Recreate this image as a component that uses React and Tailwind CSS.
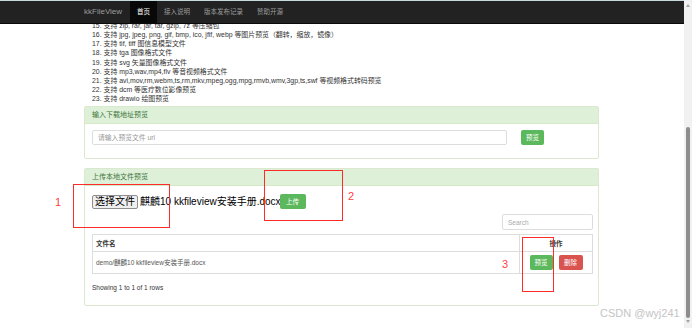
export default function App() {
  const lines = [
    "15. 支持 zip, rar, jar, tar, gzip, 7z 等压缩包",
    "16. 支持 jpg, jpeg, png, gif, bmp, ico, jfif, webp 等图片预览（翻转，缩放，镜像）",
    "17. 支持 tif, tiff 图信息模型文件",
    "18. 支持 tga 图像格式文件",
    "19. 支持 svg 矢量图像格式文件",
    "20. 支持 mp3,wav,mp4,flv 等音视频格式文件",
    "21. 支持 avi,mov,rm,webm,ts,rm,mkv,mpeg,ogg,mpg,rmvb,wmv,3gp,ts,swf 等视频格式转码预览",
    "22. 支持 dcm 等医疗数位影像预览",
    "23. 支持 drawio 绘图预览",
  ];
  return (
    <div className="relative flex h-[328px] w-[692px] overflow-hidden bg-white font-['Liberation_Sans','Noto_Sans_CJK_SC',sans-serif] text-[#333]">
      <div className="flex w-[684px] flex-col">
        <nav className="relative z-10 flex h-[24px] shrink-0 items-stretch border-t border-t-[#c9dadd] border-b border-b-[#0a0a0a] bg-[#222] pl-[84px] text-[6.5px] text-[#9d9d9d]">
          <div className="flex w-[46px] items-center text-[8px]">kkFileView</div>
          <div className="flex items-center bg-[#080808] px-[7px] text-white">首页</div>
          <div className="flex items-center px-[7px]">接入说明</div>
          <div className="flex items-center px-[7px]">版本发布记录</div>
          <div className="flex items-center px-[7px]">赞助开源</div>
        </nav>
        <div className="ml-[84px] -mt-[3px] w-[515px]">
          <div className="pl-[8px] text-[6.9px] leading-[9.15px]">
            {lines.map((l) => (
              <div key={l} className="whitespace-nowrap">{l}</div>
            ))}
          </div>

          <div className="mt-[3px] rounded-[2px] border border-[#d9e8cf]">
            <div className="flex h-[17px] items-center border-b border-[#d6e9c6] bg-[#dff0d8] pl-[7px] text-[7px] text-[#3c763d]">
              输入下载地址预览
            </div>
            <div className="flex items-center pl-[7px] pt-[6px] pb-[13px]">
              <div className="flex h-[15px] w-[415px] items-center rounded-[2px] border border-[#ddd] pl-[5px] text-[6.8px] text-[#999]">
                请输入预览文件 url
              </div>
              <div className="ml-[14px] flex h-[15px] w-[23px] items-center justify-center rounded-[2px] bg-[#5cb85c] text-[6.5px] text-white">
                预览
              </div>
            </div>
          </div>

          <div className="mt-[9px] rounded-[2px] border border-[#d9e8cf]">
            <div className="flex h-[17px] items-center border-b border-[#d6e9c6] bg-[#dff0d8] pl-[7px] text-[7px] text-[#3c763d]">
              上传本地文件预览
            </div>
            <div className="pl-[7px] pr-[5px] pt-[8px] pb-[13px]">
              <div className="flex h-[15px] items-center">
                <div className="flex h-[14px] items-center rounded-[2px] border border-[#8f8f8f] bg-[#efefef] px-[2px] text-[10px] leading-none text-black">
                  选择文件
                </div>
                <div className="ml-[2px] text-[10px] leading-none whitespace-nowrap text-black">麒麟10 kkfileview安装手册.docx</div>
                <div className="-ml-[1px] flex h-[15px] w-[26px] items-center justify-center rounded-[2px] bg-[#5cb85c] text-[6.5px] text-white">
                  上传
                </div>
              </div>
              <div className="mt-[5px] flex justify-end">
                <div className="flex h-[16px] w-[91px] items-center rounded-[2px] border border-[#ddd] pl-[5px] text-[6.5px] text-[#aaa]">
                  Search
                </div>
              </div>
              <div className="mt-[4px] border border-[#ddd] text-[6.5px]">
                <div className="flex h-[17px] border-b border-[#ddd]">
                  <div className="flex flex-1 items-center border-r border-[#ddd] pl-[3px] font-bold">文件名</div>
                  <div className="flex w-[72px] items-center justify-center font-bold">操作</div>
                </div>
                <div className="flex h-[21px]">
                  <div className="flex flex-1 items-center border-r border-[#ddd] pl-[3px] text-[#555]">demo/麒麟10 kkfileview安装手册.docx</div>
                  <div className="flex w-[72px] items-center justify-center gap-[6px]">
                    <div className="flex h-[15px] w-[23px] items-center justify-center rounded-[2px] bg-[#5cb85c] text-white">预览</div>
                    <div className="flex h-[15px] w-[24px] items-center justify-center rounded-[2px] bg-[#d9534f] text-white">删除</div>
                  </div>
                </div>
              </div>
              <div className="mt-[9px] text-[6.5px] leading-[9px]">Showing 1 to 1 of 1 rows</div>
            </div>
          </div>
        </div>
      </div>

      <div className="relative flex w-[8px] flex-col items-center bg-[#f1f1f1]">
        <div className="mt-[4px] h-0 w-0 border-x-[2.5px] border-b-[3px] border-x-transparent border-b-[#a3a3a3]"></div>
        <div className="mt-[120px] h-[191px] w-[4px] rounded-[2px] bg-[#8d8d8d]"></div>
        <div className="mt-[2px] h-0 w-0 border-x-[2.5px] border-t-[3px] border-x-transparent border-t-[#a3a3a3]"></div>
      </div>

      <div className="absolute left-[73px] top-[184px] h-[44px] w-[97px] border-[1.5px] border-[#ff2b2b]"></div>
      <div className="absolute left-[264px] top-[170px] h-[51px] w-[79px] border-[1.5px] border-[#ff2b2b]"></div>
      <div className="absolute left-[522px] top-[237px] h-[55px] w-[32px] border-[1.5px] border-[#ff2b2b]"></div>
      <div className="absolute left-[55px] top-[197px] text-[11px] leading-none text-[#ff4040]">1</div>
      <div className="absolute left-[348px] top-[191px] text-[11px] leading-none text-[#ff4040]">2</div>
      <div className="absolute left-[502px] top-[259px] text-[11px] leading-none text-[#ff4040]">3</div>
      <div className="absolute left-[600px] top-[308px] text-[11px] leading-none whitespace-nowrap text-[#c4c4c4]">CSDN @wyj241</div>
    </div>
  );
}
